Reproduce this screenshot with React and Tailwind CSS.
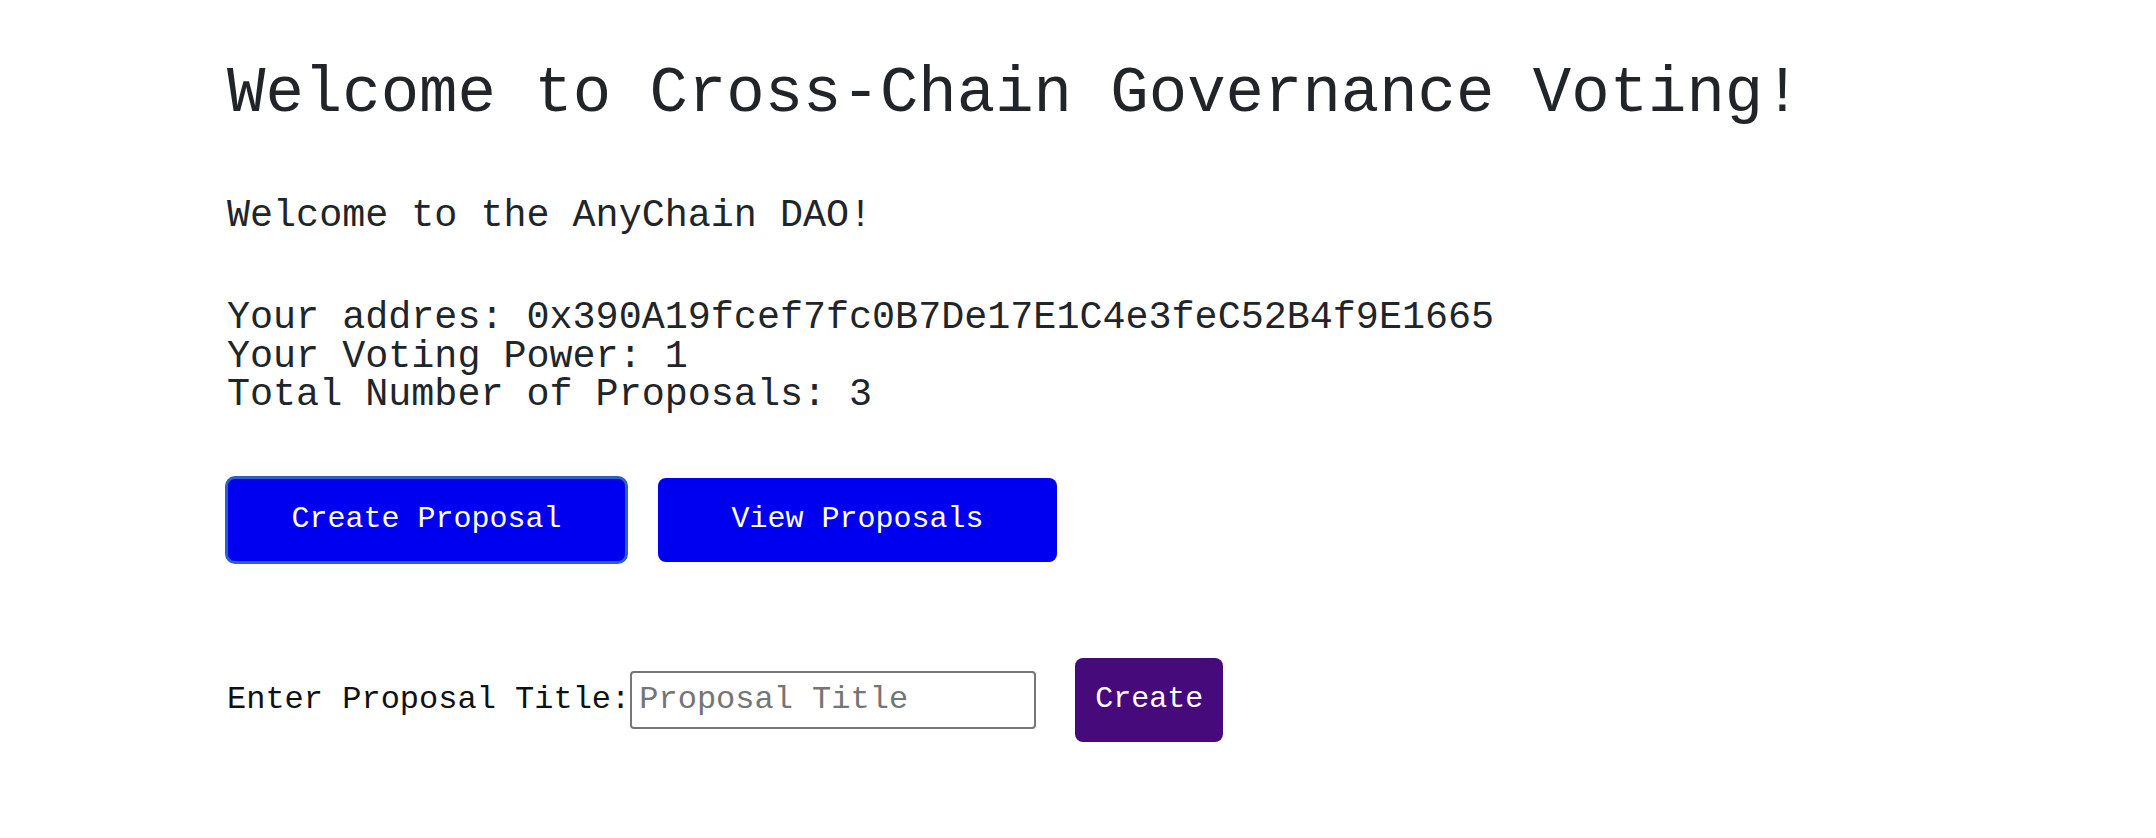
export default function App() {
  const address = '0x390A19fcef7fc0B7De17E1C4e3feC52B4f9E1665';

  return (
    <div className="min-h-screen bg-white pl-[227px] text-[#212529] font-['Liberation_Mono','Courier_New',monospace]">
      <h1 className="pt-[62px] text-[64px] leading-[64px] font-normal whitespace-nowrap">
        Welcome to Cross-Chain Governance Voting!
      </h1>

      <p className="mt-[71px] text-[38.4px] leading-[38px] whitespace-nowrap">Welcome to the AnyChain DAO!</p>

      <div className="mt-[64px] text-[38.4px] leading-[38.5px] whitespace-nowrap">
        <p>Your addres: {address}</p>
        <p>Your Voting Power: 1</p>
        <p>Total Number of Proposals: 3</p>
      </div>

      <div className="mt-[63px] flex gap-[32px]">
        <button className="w-[399px] h-[84px] rounded-[8px] bg-[#0000f0] text-white text-[30px] outline-3 -outline-offset-1 outline-[#2c60c6]">
          Create Proposal
        </button>
        <button className="w-[399px] h-[84px] rounded-[8px] bg-[#0000f0] text-white text-[30px]">
          View Proposals
        </button>
      </div>

      <div className="mt-[96px] flex items-center">
        <label className="text-[32px] leading-[32px] text-[#111] whitespace-nowrap">Enter Proposal Title:</label>
        <input
          type="text"
          placeholder="Proposal Title"
          className="w-[406px] h-[58px] border-2 border-[#767676] rounded-[4px] px-[7px] text-[32px] placeholder:text-[#757575] outline-none"
        />
        <button className="ml-[39px] w-[148px] h-[84px] rounded-[8px] bg-[#460a7a] text-white text-[30px]">
          Create
        </button>
      </div>
    </div>
  );
}
